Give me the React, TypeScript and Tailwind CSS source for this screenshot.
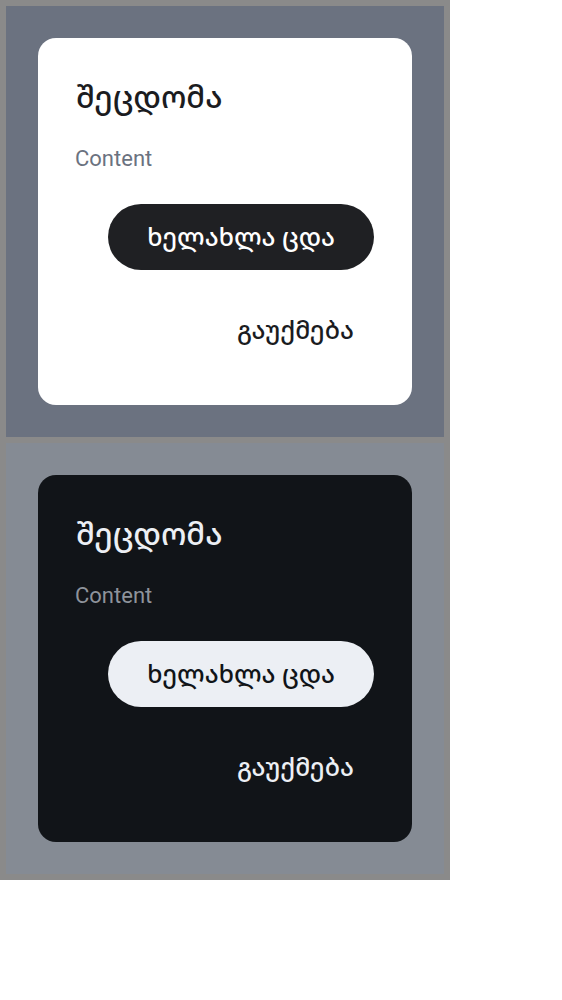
const Dialog = ({ dark }: { dark?: boolean }) => {
    return (
        <div className={dark ? "flex flex-col pt-[38px] px-[38px] pb-[42px] rounded-[18px] bg-[#111418]" : "flex flex-col pt-[38px] px-[38px] pb-[42px] rounded-[18px] bg-white"}>
            <h2 className={dark ? "font-['Noto_Sans_Georgian',sans-serif] font-medium text-[31px] leading-[40px] text-[#eceff4]" : "font-['Noto_Sans_Georgian',sans-serif] font-medium text-[31px] leading-[40px] text-[#1b1c1f]"}>შეცდომა</h2>
            <p className={dark ? "mt-[29px] -ml-[1px] text-[22px] leading-[28px] text-[#8e939b]" : "mt-[29px] -ml-[1px] text-[22px] leading-[28px] text-[#6b7280]"}>Content</p>
            <div className="flex flex-col items-end mt-[31px] gap-[27px] font-['Noto_Sans_Georgian',sans-serif] font-medium">
                <button className={dark ? "h-[66px] px-[39px] rounded-full bg-[#eceff4] text-[#111418] text-[25px]" : "h-[66px] px-[39px] rounded-full bg-[#1f2023] text-white text-[25px]"}>
                    ხელახლა ცდა
                </button>
                <button className={dark ? "h-[66px] px-[20px] text-[25px] text-[#eceff4]" : "h-[66px] px-[20px] text-[25px] text-[#1b1c1f]"}>
                    გაუქმება
                </button>
            </div>
        </div>
    )
}

const App = () => {
    return (
        <div className="w-[450px] bg-[#8a8a8a] p-[6px] flex flex-col gap-[6px] font-['Roboto',sans-serif]">
            <div className="bg-[#6b7280] p-[32px]">
                <Dialog />
            </div>
            <div className="bg-[#858b94] p-[32px]">
                <Dialog dark />
            </div>
        </div>
    )
}

export default App
